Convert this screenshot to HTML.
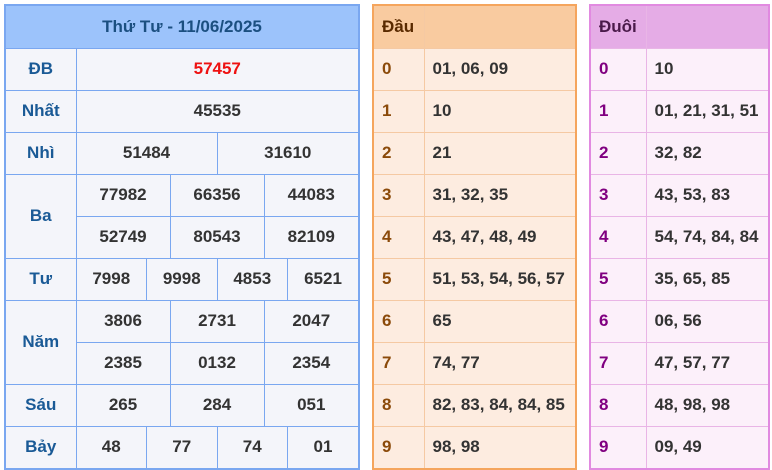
<!DOCTYPE html>
<html><head><style>
body{margin:0;width:772px;height:470px;background:#fff;font-family:"Liberation Sans",sans-serif;font-weight:bold;font-size:17px;color:#333;position:relative;overflow:hidden}
.w{position:absolute;top:4px;box-sizing:border-box}
table{border-collapse:collapse;width:100%;table-layout:fixed;font-weight:bold;font-size:17px}
td{height:42px;padding:0;text-align:center;box-sizing:border-box}
#a{left:4px;width:356px;border:2px solid #7aa7f0;background:#f4f5fa}
#a td{border:1px solid #7aa7f0}
#a tr:first-child td{border-top:0}
#a tr:last-child td{border-bottom:0}
#a td:first-child{border-left:0}
#a td:last-child{border-right:0}
#a .h{background:#9cc3fb;color:#1b4f80;height:42px}
#a .l{color:#1a5a96}
#a .r{color:#ee1111}
#b{left:372px;width:205px;border:2px solid #f5a55d;background:#fdece0}
#c{left:589px;width:181px;border:2px solid #e18ae0;background:#fcf0fa}
#b td,#c td{text-align:left;padding-left:8px}
#b td{border:1px solid #f5c9a3}
#c td{border:1px solid #e9b5e6}
#b tr:first-child td,#c tr:first-child td{border-top:0}
#b tr:last-child td,#c tr:last-child td{border-bottom:0}
#b td:first-child,#c td:first-child{border-left:0}
#b td:last-child,#c td:last-child{border-right:0}
#b .h{background:#f9cba0;color:#5a2a00}
#c .h{background:#e5ace6;color:#4a1a4a}
#b td.d{color:#8b4a0a}
#c td.d{color:#800080}
</style></head><body>
<div class="w" id="a"><table>
<colgroup><col style="width:70px"><col><col><col><col><col><col><col><col><col><col><col><col></colgroup>
<tr><td class="h" colspan="13">Thứ Tư - 11/06/2025</td></tr>
<tr><td class="l">ĐB</td><td colspan="12" class="r">57457</td></tr>
<tr><td class="l">Nhất</td><td colspan="12">45535</td></tr>
<tr><td class="l">Nhì</td><td colspan="6">51484</td><td colspan="6">31610</td></tr>
<tr><td class="l" rowspan="2">Ba</td><td colspan="4">77982</td><td colspan="4">66356</td><td colspan="4">44083</td></tr>
<tr><td colspan="4">52749</td><td colspan="4">80543</td><td colspan="4">82109</td></tr>
<tr><td class="l">Tư</td><td colspan="3">7998</td><td colspan="3">9998</td><td colspan="3">4853</td><td colspan="3">6521</td></tr>
<tr><td class="l" rowspan="2">Năm</td><td colspan="4">3806</td><td colspan="4">2731</td><td colspan="4">2047</td></tr>
<tr><td colspan="4">2385</td><td colspan="4">0132</td><td colspan="4">2354</td></tr>
<tr><td class="l">Sáu</td><td colspan="4">265</td><td colspan="4">284</td><td colspan="4">051</td></tr>
<tr><td class="l">Bảy</td><td colspan="3">48</td><td colspan="3">77</td><td colspan="3">74</td><td colspan="3">01</td></tr>
</table></div>
<div class="w" id="b"><table><colgroup><col style="width:50px"><col></colgroup>
<tr><td class="h">Đầu</td><td class="h"></td></tr>
<tr><td class="d">0</td><td>01, 06, 09</td></tr>
<tr><td class="d">1</td><td>10</td></tr>
<tr><td class="d">2</td><td>21</td></tr>
<tr><td class="d">3</td><td>31, 32, 35</td></tr>
<tr><td class="d">4</td><td>43, 47, 48, 49</td></tr>
<tr><td class="d">5</td><td>51, 53, 54, 56, 57</td></tr>
<tr><td class="d">6</td><td>65</td></tr>
<tr><td class="d">7</td><td>74, 77</td></tr>
<tr><td class="d">8</td><td>82, 83, 84, 84, 85</td></tr>
<tr><td class="d">9</td><td>98, 98</td></tr>
</table></div>
<div class="w" id="c"><table><colgroup><col style="width:55px"><col></colgroup>
<tr><td class="h">Đuôi</td><td class="h"></td></tr>
<tr><td class="d">0</td><td>10</td></tr>
<tr><td class="d">1</td><td>01, 21, 31, 51</td></tr>
<tr><td class="d">2</td><td>32, 82</td></tr>
<tr><td class="d">3</td><td>43, 53, 83</td></tr>
<tr><td class="d">4</td><td>54, 74, 84, 84</td></tr>
<tr><td class="d">5</td><td>35, 65, 85</td></tr>
<tr><td class="d">6</td><td>06, 56</td></tr>
<tr><td class="d">7</td><td>47, 57, 77</td></tr>
<tr><td class="d">8</td><td>48, 98, 98</td></tr>
<tr><td class="d">9</td><td>09, 49</td></tr>
</table></div>
</body></html>
